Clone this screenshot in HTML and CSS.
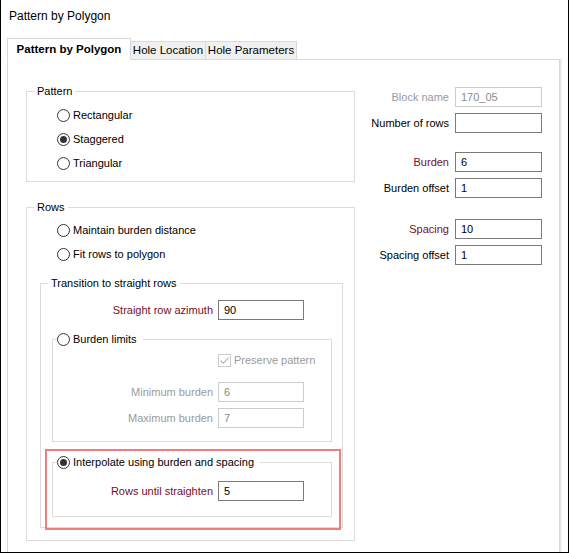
FILE: index.html
```html
<!DOCTYPE html>
<html>
<head>
<meta charset="utf-8">
<link rel="stylesheet" href="styles.css">
</head>
<body>
<div class="window">
  <div class="title">Pattern by Polygon</div>
  <div class="tabs">
    <div class="tab active">Pattern by Polygon</div>
    <div class="tab tab-hl">Hole Location</div>
    <div class="tab tab-hp">Hole Parameters</div>
  </div>
  <div class="panel">
    <div class="leftcol">
      <fieldset class="fs fs-pattern">
        <legend>Pattern</legend>
        <div class="rrow"><span class="radio"></span>Rectangular</div>
        <div class="rrow"><span class="radio on"></span>Staggered</div>
        <div class="rrow"><span class="radio"></span>Triangular</div>
      </fieldset>
      <fieldset class="fs fs-rows">
        <legend>Rows</legend>
        <div class="rrow"><span class="radio"></span>Maintain burden distance</div>
        <div class="rrow"><span class="radio"></span>Fit rows to polygon</div>
        <fieldset class="fs fs-trans">
          <legend>Transition to straight rows</legend>
          <div class="frow azimuth">
            <label class="lbl lbl-t req">Straight row azimuth</label>
            <input class="tb" type="text" value="90">
          </div>
          <fieldset class="fs fs-inner fs-limits">
            <legend class="rlegend"><span class="radio"></span>Burden limits</legend>
            <div class="chkrow">
              <span class="chk"><svg width="11" height="11" viewBox="0 0 11 11"><path d="M1.5 5.5 L4.3 8.3 L9.6 2.6" fill="none" stroke="#bdbdbd" stroke-width="1.3"/></svg></span>
              <span class="dis">Preserve pattern</span>
            </div>
            <div class="frow minb">
              <label class="lbl lbl-i dis">Minimum burden</label>
              <input class="tb" type="text" value="6" disabled>
            </div>
            <div class="frow maxb">
              <label class="lbl lbl-i dis">Maximum burden</label>
              <input class="tb" type="text" value="7" disabled>
            </div>
          </fieldset>
          <div class="highlight">
            <fieldset class="fs fs-inner fs-interp">
              <legend class="rlegend"><span class="radio on"></span>Interpolate using burden and spacing</legend>
              <div class="frow until">
                <label class="lbl lbl-i req">Rows until straighten</label>
                <input class="tb" type="text" value="5">
              </div>
            </fieldset>
          </div>
        </fieldset>
      </fieldset>
    </div>
    <div class="rightcol">
      <div class="frow r-block">
        <label class="lbl lbl-r dis">Block name</label>
        <input class="tb tb-r" type="text" value="170_05" disabled>
      </div>
      <div class="frow r-num">
        <label class="lbl lbl-r">Number of rows</label>
        <input class="tb tb-r" type="text" value="">
      </div>
      <div class="frow r-burden">
        <label class="lbl lbl-r req">Burden</label>
        <input class="tb tb-r" type="text" value="6">
      </div>
      <div class="frow r-boff">
        <label class="lbl lbl-r">Burden offset</label>
        <input class="tb tb-r" type="text" value="1">
      </div>
      <div class="frow r-spacing">
        <label class="lbl lbl-r req">Spacing</label>
        <input class="tb tb-r" type="text" value="10">
      </div>
      <div class="frow r-soff">
        <label class="lbl lbl-r">Spacing offset</label>
        <input class="tb tb-r" type="text" value="1">
      </div>
    </div>
  </div>
</div>
</body>
</html>
```
FILE: styles.css
```css
html, body {
  margin: 0;
  padding: 0;
  background: #fff;
}
body {
  font-family: "Liberation Sans", Arial, sans-serif;
  font-size: 11px;
  color: #000;
}
.window {
  width: 569px;
  height: 553px;
  box-sizing: border-box;
  border: 1px solid #000;
  border-top: none;
  background: #fff;
  display: flex;
  flex-direction: column;
  overflow: hidden;
}
.title {
  height: 38px;
  box-sizing: border-box;
  padding: 9px 0 0 8px;
  line-height: 14px;
  font-size: 12px;
  flex: none;
}
.tabs {
  display: flex;
  align-items: flex-end;
  margin-left: 6px;
  height: 22px;
  margin-bottom: -1px;
  position: relative;
  z-index: 1;
  flex: none;
}
.tab {
  box-sizing: border-box;
  height: 19px;
  border: 1px solid #d9d9d9;
  background: #f0f0f0;
  text-align: center;
  line-height: 17px;
  font-size: 11.5px;
}
.tab.active {
  width: 124px;
  height: 22px;
  background: #fff;
  border-bottom-color: #fff;
  font-weight: bold;
  line-height: 20px;
  font-size: 11.5px;
}
.tab-hl {
  width: 75px;
  border-left: none;
}
.tab-hp {
  width: 91px;
  border-left: none;
}
.panel {
  margin-left: 6px;
  width: 553px;
  box-sizing: border-box;
  flex: 1;
  border: 1px solid #d9d9d9;
  border-bottom: none;
  box-shadow: 1px 0 0 #e6e6e6, 2px 0 0 #f2f2f2;
  display: flex;
  padding-left: 18px;
}
.leftcol {
  width: 329px;
  padding-top: 24px;
  flex: none;
}
.rightcol {
  padding-top: 27px;
  flex: none;
}
.fs {
  margin: 0;
  padding: 0;
  border: 1px solid #dcdcdc;
  min-width: 0;
  box-sizing: border-box;
}
.fs > legend {
  padding: 0 3px;
  margin-left: 7px;
  line-height: 14px;
  height: 14px;
}
.fs > legend.rlegend {
  display: flex;
  align-items: center;
  margin-left: 4px;
  padding: 0 6px 0 0;
}
.fs-pattern {
  width: 329px;
  padding: 5px 0 6px 0;
}
.fs-rows {
  width: 329px;
  margin-top: 18px;
  padding: 4px 0 12px 0;
}
.fs-pattern > .rrow,
.fs-rows > .rrow {
  padding-left: 30px;
}
.rrow {
  display: flex;
  align-items: center;
  height: 24px;
}
.radio {
  width: 13px;
  height: 13px;
  box-sizing: border-box;
  border: 1px solid #333;
  border-radius: 50%;
  background: #fff;
  margin-right: 3px;
  flex: none;
  display: flex;
  align-items: center;
  justify-content: center;
}
.radio.on::after {
  content: "";
  width: 7px;
  height: 7px;
  border-radius: 50%;
  background: #333;
}
.fs-trans {
  width: 303px;
  margin: 10px 0 0 13px;
  padding: 0;
}
.frow {
  display: flex;
  align-items: center;
  height: 20px;
}
.lbl {
  text-align: right;
  margin-right: 5px;
  white-space: nowrap;
  flex: none;
}
.lbl-t { width: 172px; }
.lbl-i { width: 160px; }
.lbl-r { width: 94px; margin-right: 6px; }
.req { color: #7a0d24; }
.dis { color: #9a9a9a; }
.tb {
  width: 86px;
  height: 20px;
  box-sizing: border-box;
  border: 1px solid #7a7a7a;
  padding: 0 0 0 5px;
  margin: 0;
  font: inherit;
  color: #000;
  background: #fff;
  outline: none;
}
.tb:disabled {
  border-color: #cccccc;
  color: #8a8a8a;
  background: #fff;
}
.tb-r { width: 87px; }
.azimuth { margin-top: 10px; }
.fs-inner {
  width: 280px;
}
.fs-limits {
  margin: 12px 0 0 11px;
  padding: 0 0 13px 0;
}
.chkrow {
  display: flex;
  align-items: center;
  height: 16px;
  margin-top: 6px;
  padding-left: 165px;
}
.chk {
  width: 13px;
  height: 13px;
  box-sizing: border-box;
  border: 1px solid #cccccc;
  margin-right: 3px;
  display: flex;
  align-items: center;
  justify-content: center;
  flex: none;
}
.minb { margin-top: 14px; }
.maxb { margin-top: 6px; }
.highlight {
  width: 296px;
  box-sizing: border-box;
  margin: 7px 0 -3px 4px;
  border: 2px solid #f47c7c;
  padding: 4px 0 11px 5px;
}
.fs-interp {
  padding: 0 0 15px 0;
}
.until { margin-top: 12px; }
.r-num { margin-top: 6px; }
.r-burden { margin-top: 19px; }
.r-boff { margin-top: 6px; }
.r-spacing { margin-top: 21px; }
.r-soff { margin-top: 6px; }
```
